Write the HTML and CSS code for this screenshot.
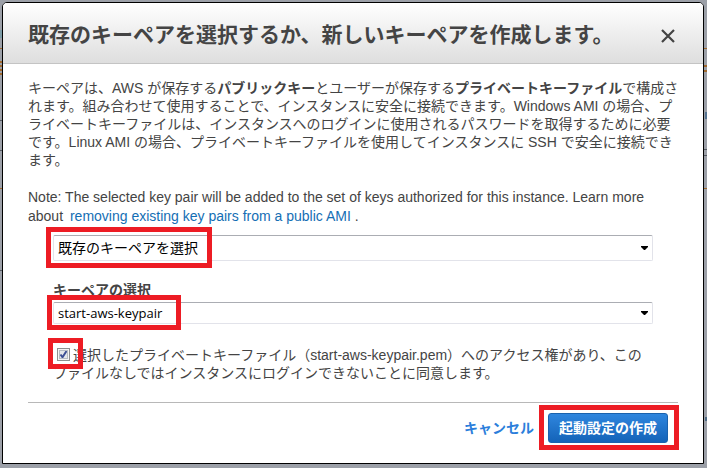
FILE: index.html
```html
<!DOCTYPE html>
<html lang="ja">
<head>
<meta charset="utf-8">
<title>キーペアの選択</title>
<link rel="stylesheet" href="styles.css">
</head>
<body>
<main class="dialog" role="dialog" aria-labelledby="dialog-title">
  <header class="dialog-header">
    <h1 id="dialog-title" class="dialog-title">既存のキーペアを選択するか、新しいキーペアを作成します。</h1>
    <button class="close" type="button" aria-label="閉じる">
      <svg viewBox="0 0 14 14" width="14" height="14" aria-hidden="true"><path d="M1 1 13 13M13 1 1 13" fill="none" stroke="#444" stroke-width="2.2"/></svg>
    </button>
  </header>
  <form class="dialog-body">
    <p class="intro">キーペアは、AWS が保存する<b>パブリックキー</b>とユーザーが保存する<b>プライベートキーファイル</b>で構成さ<br>れます。組み合わせて使用することで、インスタンスに安全に接続できます。Windows AMI の場合、プ<br>ライベートキーファイルは、インスタンスへのログインに使用されるパスワードを取得するために必要<br>です。Linux AMI の場合、プライベートキーファイルを使用してインスタンスに SSH で安全に接続でき<br>ます。</p>
    <p class="note">Note: The selected key pair will be added to the set of keys authorized for this instance. Learn more<br>about <a class="link" href="#">removing existing key pairs from a public AMI</a> .</p>
    <div class="fields">
      <div class="field">
        <select class="select select-tall" aria-label="キーペアのオプション"><option>既存のキーペアを選択</option></select>
        <span class="mark mark-option"></span>
      </div>
      <label class="field-label" for="keypair">キーペアの選択</label>
      <div class="field">
        <select class="select select-latin" id="keypair"><option>start-aws-keypair</option></select>
        <span class="mark mark-keypair"></span>
      </div>
      <div class="field consent">
        <input class="check" type="checkbox" id="consent" checked><label for="consent">選択したプライベートキーファイル（start-aws-keypair.pem）へのアクセス権があり、この<br>ファイルなしではインスタンスにログインできないことに同意します。</label>
        <span class="mark mark-consent"></span>
      </div>
    </div>
    <footer class="actions">
      <a class="cancel" href="#">キャンセル</a>
      <div class="field">
        <button class="primary" type="button">起動設定の作成</button>
        <span class="mark mark-submit"></span>
      </div>
    </footer>
  </form>
</main>
</body>
</html>
```
FILE: styles.css
```css
* { box-sizing: border-box; }

/* The dimmed page behind the dialog shows as slivers at both edges */
body {
  margin: 0;
  padding: 2px 3px 4px 2px;
  color: #444;
  background:
    linear-gradient(#7c9ba6, #7c9ba6) 0 30px / 2px 8px no-repeat,
    linear-gradient(#a0692f, #a0692f) 0 48px / 2px 1px no-repeat,
    repeating-linear-gradient(#a0692f 0 2px, #9ca0a8 2px 4px) 0 61px / 2px 14px no-repeat,
    linear-gradient(#555a62, #555a62) 0 120px / 2px 1px no-repeat,
    linear-gradient(#555a62, #555a62) 0 150px / 2px 1px no-repeat,
    linear-gradient(#a0692f, #a0692f) 0 188px / 2px 1px no-repeat,
    linear-gradient(#555a62, #555a62) 0 270px / 2px 1px no-repeat,
    linear-gradient(#a0692f, #a0692f) 100% 48px / 3px 1px no-repeat,
    repeating-linear-gradient(#a0692f 0 2px, #9ca0a8 2px 5px) 100% 65px / 3px 9px no-repeat,
    linear-gradient(#557492, #557492) 100% 112px / 2px 7px no-repeat,
    linear-gradient(#555a62, #555a62) 100% 149px / 3px 1px no-repeat,
    linear-gradient(#555a62, #555a62) 100% 155px / 3px 1px no-repeat,
    linear-gradient(#a0692f, #a0692f) 100% 188px / 3px 1px no-repeat,
    linear-gradient(#4f6b85, #4f6b85) 100% 417px / 2px 4px no-repeat,
    #9ca0a8;
  font: 14px/18px "Liberation Sans", "Noto Sans CJK JP", sans-serif;
}

.dialog {
  background: #fff;
  border: 1px solid #000;
  border-radius: 5px 5px 0 0;
}

.dialog-header {
  display: flex;
  align-items: center;
  justify-content: space-between;
  height: 61px;
  padding: 4px 28px 0 25px;
  border-bottom: 1px solid #c4c4c4;
  border-radius: 4px 4px 0 0;
  background: linear-gradient(#fff, #dedede);
}

.dialog-title {
  margin: 0;
  font-size: 21px;
  line-height: 28px;
  white-space: nowrap;
}

.close {
  display: flex;
  padding: 2px 0 0;
  border: 0;
  background: none;
}

.dialog-body { padding: 15px 25px 20px; }

.intro, .note {
  margin: 0;
  white-space: nowrap;
}

.note {
  margin-top: 19px;
  line-height: 19px;
}

.link { margin-left: 3px; color: #146eb4; text-decoration: none; }

.fields { padding: 9px 25px 0; }

.field { position: relative; }

.select {
  display: block;
  width: 100%;
  height: 22px;
  padding: 0 4px;
  appearance: none;
  border: 1px solid #e2e3ea;
  border-top-color: #abadb3;
  border-radius: 2px;
  color: #000;
  background: #fff url("data:image/svg+xml,%3Csvg xmlns='http://www.w3.org/2000/svg' width='7' height='4'%3E%3Cpath d='M0 0H7V1L4 4H3L0 1Z'/%3E%3C/svg%3E") no-repeat right 4px center;
  font: 14px/18px "Open Sans", "Noto Sans CJK JP", sans-serif;
}

.select-tall { height: 26px; }

.select-latin { font-size: 13px; }

.field-label {
  display: block;
  margin: 20px 0 3px;
  font-weight: bold;
}

.consent {
  margin-top: 22px;
  white-space: nowrap;
}

.check {
  width: 13px;
  height: 13px;
  margin: 0 3px 0 4px;
  appearance: none;
  vertical-align: -1px;
  border: 1px solid #8e8f8f;
  background: #e4e7ea;
  box-shadow: inset 0 0 0 1px #f4f4f4, inset 0 0 0 2px #b5bcc4;
}

.check:checked {
  background-image: url("data:image/svg+xml,%3Csvg xmlns='http://www.w3.org/2000/svg' width='11' height='11'%3E%3Cpath d='M2.5 5.5 4.5 8.3 8.5 2' fill='none' stroke='%233c4f94' stroke-width='2'/%3E%3C/svg%3E");
}

.actions {
  display: flex;
  align-items: center;
  justify-content: flex-end;
  gap: 14px;
  margin-top: 20px;
  padding: 10px 10px 0 0;
  border-top: 1px solid #b8b8b8;
}

.cancel {
  color: #2b7edb;
  font-weight: bold;
  text-decoration: none;
}

.primary {
  display: block;
  height: 30px;
  padding: 0 10px;
  border: 1px solid #1a62ad;
  border-radius: 3px;
  color: #fff;
  background: linear-gradient(#2f86de, #1463b8);
  font: bold 14px/18px "Liberation Sans", "Noto Sans CJK JP", sans-serif;
}

/* Red callout frames laid over the controls */
.mark {
  position: absolute;
  border: 5px solid #ed1c24;
  pointer-events: none;
}

.mark-option { left: -7px; top: -8px; width: 166px; height: 41px; }
.mark-keypair { left: -6px; top: -7px; width: 134px; height: 35px; }
.mark-consent { left: -5px; top: -8px; width: 35px; height: 31px; }
.mark-submit { inset: -8px -11px -7px -9px; }
```
